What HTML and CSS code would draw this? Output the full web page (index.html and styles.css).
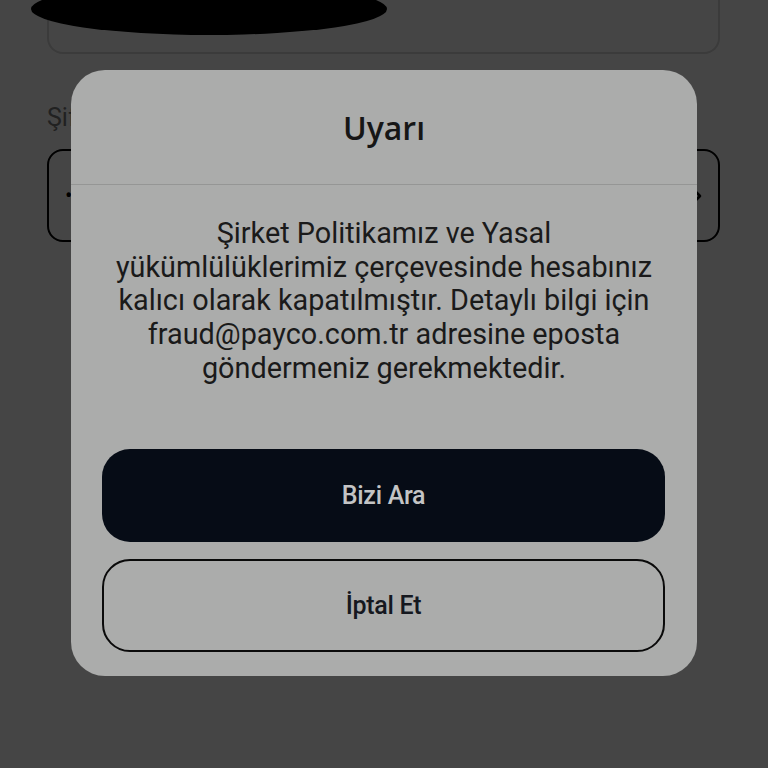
FILE: index.html
```html
<!DOCTYPE html>
<html lang="tr">
  <head>
    <meta charset="UTF-8" />
    <meta name="viewport" content="width=device-width, initial-scale=1" />
    <title>Uyarı</title>
    <link rel="stylesheet" href="styles.css">
  </head>
  <body>
    <!-- Arka plandaki sayfa -->
    <main class="page">
      <div class="top-card">
        <span class="redact"></span>
      </div>

      <label class="field-label" for="password">Şifre</label>
      <div class="field" id="password">
        <span class="dots">•</span>
        <svg class="chevron" width="14" height="20" viewBox="0 0 14 20">
          <path d="M3 3 L10 10 L3 17" fill="none" stroke="#000" stroke-width="2.6" stroke-linecap="round" stroke-linejoin="round" />
        </svg>
      </div>
    </main>

    <!-- Uyarı penceresi -->
    <div class="overlay">
      <div class="dialog" role="dialog" aria-labelledby="dialog-title">
        <h2 class="dialog-title" id="dialog-title">Uyarı</h2>
        <p class="dialog-text">
          Şirket Politikamız ve Yasal<br />
          yükümlülüklerimiz çerçevesinde hesabınız<br />
          kalıcı olarak kapatılmıştır. Detaylı bilgi için<br />
          fraud@payco.com.tr adresine eposta<br />
          göndermeniz gerekmektedir.
        </p>
        <div class="dialog-actions">
          <button type="button" class="btn btn-primary">Bizi Ara</button>
          <button type="button" class="btn btn-outline">İptal Et</button>
        </div>
      </div>
    </div>
  </body>
</html>
```

FILE: styles.css
```css
* {
  box-sizing: border-box;
}

body {
  margin: 0;
  background: #fff;
  font-family: Roboto, "Liberation Sans", sans-serif;
  width: 768px;
  height: 768px;
  overflow: hidden;
}

/* Arka plan sayfası */
.page {
  padding: 0 48px 0 47px;
  display: flex;
  flex-direction: column;
}

.top-card {
  position: relative;
  height: 54px;
  border: 2px solid #d8d8d8;
  border-top: none;
  border-radius: 0 0 16px 16px;
}

/* Üstteki karalanmış alan */
.redact {
  position: absolute;
  left: -18px;
  top: -17px;
  width: 356px;
  height: 52px;
  background: #000;
  border-radius: 50%;
}

.field-label {
  margin-top: 48px;
  font-size: 25px;
  line-height: 32px;
  color: #7a7a7a;
}

.field {
  margin-top: 15px;
  height: 93px;
  border: 2px solid #000;
  border-radius: 16px;
  display: flex;
  align-items: center;
  justify-content: space-between;
  padding: 0 14px 0 16px;
}

.dots {
  font-size: 22px;
  color: #000;
}

/* Karartma katmanı */
.overlay {
  position: fixed;
  top: 0;
  left: 0;
  right: 0;
  bottom: 0;
  background: rgba(0, 0, 0, 0.73);
  display: flex;
  justify-content: center;
  align-items: flex-start;
  padding-top: 70px;
}

.dialog {
  width: 626px;
  background: #abacab;
  border-radius: 34px;
  padding-bottom: 24px;
}

.dialog-title {
  margin: 0;
  height: 115px;
  display: flex;
  align-items: center;
  justify-content: center;
  font-family: "Open Sans", sans-serif;
  font-weight: 600;
  font-size: 32px;
  color: #161616;
  border-bottom: 1px solid #959695;
}

.dialog-text {
  margin: 32px 0 0;
  text-align: center;
  font-size: 28.8px;
  line-height: 33.7px;
  color: #1a1a1a;
}

.dialog-actions {
  margin-top: 63px;
  padding: 0 32px 0 31px;
  display: flex;
  flex-direction: column;
  gap: 17px;
}

.btn {
  height: 93px;
  border-radius: 28px;
  font-family: Roboto, sans-serif;
  font-weight: 500;
  font-size: 25px;
  letter-spacing: -0.3px;
  cursor: pointer;
}

.btn-primary {
  background: #060c16;
  border: none;
  color: #c3c4c5;
}

.btn-outline {
  background: transparent;
  border: 2px solid #0a0a0a;
  color: #15181f;
}
```
